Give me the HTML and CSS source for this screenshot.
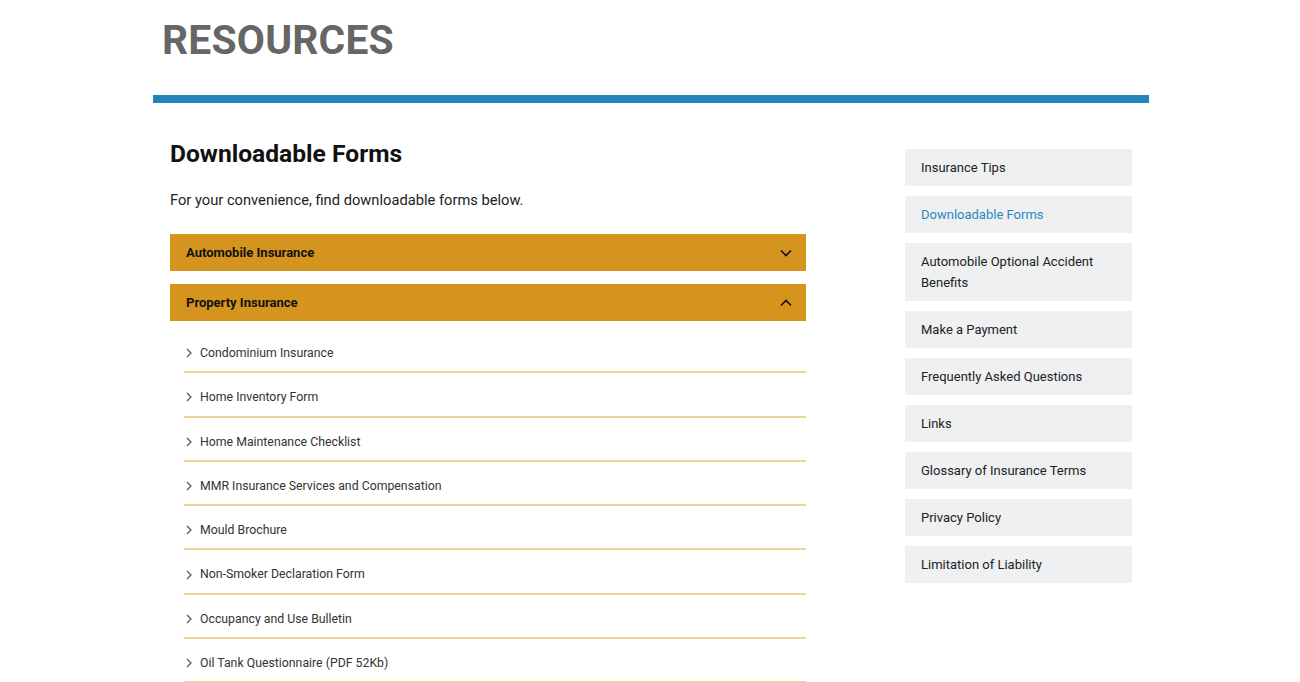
FILE: index.html
```html
<!DOCTYPE html>
<html lang="en">
<head>
<meta charset="utf-8">
<title>Resources - Downloadable Forms</title>
<link rel="stylesheet" href="styles.css">
</head>
<body>
<div class="page">
  <header class="page-head">
    <h1 class="page-title">RESOURCES</h1>
    <div class="page-rule"></div>
  </header>

  <div class="layout">
    <main class="content">
      <h2 class="content-title">Downloadable Forms</h2>
      <p class="intro">For your convenience, find downloadable forms below.</p>

      <section class="accordion">
        <button class="acc-head" type="button">
          <span>Automobile Insurance</span>
          <svg class="acc-icon" viewBox="0 0 12 8" width="12" height="8"><path d="M1 1.5l5 5 5-5" fill="none" stroke="#111" stroke-width="1.6"/></svg>
        </button>
      </section>

      <section class="accordion open">
        <button class="acc-head" type="button">
          <span>Property Insurance</span>
          <svg class="acc-icon" viewBox="0 0 12 8" width="12" height="8"><path d="M1 6.5l5-5 5 5" fill="none" stroke="#111" stroke-width="1.6"/></svg>
        </button>
        <ul class="forms">
          <li><svg class="chev" viewBox="0 0 6 10" width="6" height="10"><path d="M1 1l4 4-4 4" fill="none" stroke="#555" stroke-width="1.2"/></svg>Condominium Insurance</li>
          <li><svg class="chev" viewBox="0 0 6 10" width="6" height="10"><path d="M1 1l4 4-4 4" fill="none" stroke="#555" stroke-width="1.2"/></svg>Home Inventory Form</li>
          <li><svg class="chev" viewBox="0 0 6 10" width="6" height="10"><path d="M1 1l4 4-4 4" fill="none" stroke="#555" stroke-width="1.2"/></svg>Home Maintenance Checklist</li>
          <li><svg class="chev" viewBox="0 0 6 10" width="6" height="10"><path d="M1 1l4 4-4 4" fill="none" stroke="#555" stroke-width="1.2"/></svg>MMR Insurance Services and Compensation</li>
          <li><svg class="chev" viewBox="0 0 6 10" width="6" height="10"><path d="M1 1l4 4-4 4" fill="none" stroke="#555" stroke-width="1.2"/></svg>Mould Brochure</li>
          <li><svg class="chev" viewBox="0 0 6 10" width="6" height="10"><path d="M1 1l4 4-4 4" fill="none" stroke="#555" stroke-width="1.2"/></svg>Non-Smoker Declaration Form</li>
          <li><svg class="chev" viewBox="0 0 6 10" width="6" height="10"><path d="M1 1l4 4-4 4" fill="none" stroke="#555" stroke-width="1.2"/></svg>Occupancy and Use Bulletin</li>
          <li><svg class="chev" viewBox="0 0 6 10" width="6" height="10"><path d="M1 1l4 4-4 4" fill="none" stroke="#555" stroke-width="1.2"/></svg>Oil Tank Questionnaire (PDF 52Kb)</li>
        </ul>
      </section>
    </main>

    <aside class="sidebar">
      <a class="side-link" href="#">Insurance Tips</a>
      <a class="side-link active" href="#">Downloadable Forms</a>
      <a class="side-link" href="#">Automobile Optional Accident Benefits</a>
      <a class="side-link" href="#">Make a Payment</a>
      <a class="side-link" href="#">Frequently Asked Questions</a>
      <a class="side-link" href="#">Links</a>
      <a class="side-link" href="#">Glossary of Insurance Terms</a>
      <a class="side-link" href="#">Privacy Policy</a>
      <a class="side-link" href="#">Limitation of Liability</a>
    </aside>
  </div>
</div>
</body>
</html>
```

FILE: styles.css
```css
* {
  box-sizing: border-box;
}

html, body {
  margin: 0;
  padding: 0;
  background: #fff;
}

body {
  font-family: Roboto, "Liberation Sans", Arial, sans-serif;
  color: #222;
  overflow: hidden;
}

.page {
  width: 996px;
  margin-left: 153px;
}

/* Title and blue rule */
.page-head {
  padding-top: 16px;
}

.page-title {
  margin: 0 0 0 9px;
  font-size: 40.8px;
  line-height: 48px;
  font-weight: 700;
  color: #666;
  letter-spacing: 0.2px;
}

.page-rule {
  height: 8px;
  margin-top: 31px;
  background: #2185b9;
}

/* Two-column body */
.layout {
  display: flex;
  justify-content: space-between;
  padding: 0 17px;
}

.content {
  width: 636px;
  padding-top: 36px;
}

.content-title {
  margin: 0;
  font-size: 24.6px;
  line-height: 30px;
  font-weight: 700;
  color: #111;
}

.intro {
  margin: 21px 0 0;
  font-size: 14.7px;
  line-height: 20px;
  color: #222;
}

/* Accordion */
.accordion {
  margin-top: 13px;
}

.accordion:first-of-type {
  margin-top: 24px;
}

.acc-head {
  display: flex;
  align-items: center;
  justify-content: space-between;
  width: 100%;
  height: 37px;
  padding: 0 14px 0 16px;
  border: 0;
  background: #d4941e;
  font-family: inherit;
  font-size: 13px;
  font-weight: 700;
  color: #111;
  text-align: left;
  cursor: pointer;
}

.acc-icon {
  display: block;
}

.forms {
  list-style: none;
  margin: 0 0 0 14px;
  padding: 8px 0 0;
}

.forms li {
  display: flex;
  align-items: center;
  gap: 8px;
  padding: 15px 0 9px 2px;
  font-size: 12.3px;
  line-height: 18.3px;
  color: #333;
  border-bottom: 2px solid #f0d29a;
}

.chev {
  display: block;
  flex: none;
}

/* Sidebar navigation */
.sidebar {
  width: 227px;
  padding-top: 46px;
  display: flex;
  flex-direction: column;
  gap: 10px;
}

.side-link {
  display: block;
  padding: 8px 16px;
  background: #eef0f1;
  font-size: 13px;
  line-height: 21px;
  color: #222;
  text-decoration: none;
}

.side-link.active {
  color: #2a8ac0;
}
```
